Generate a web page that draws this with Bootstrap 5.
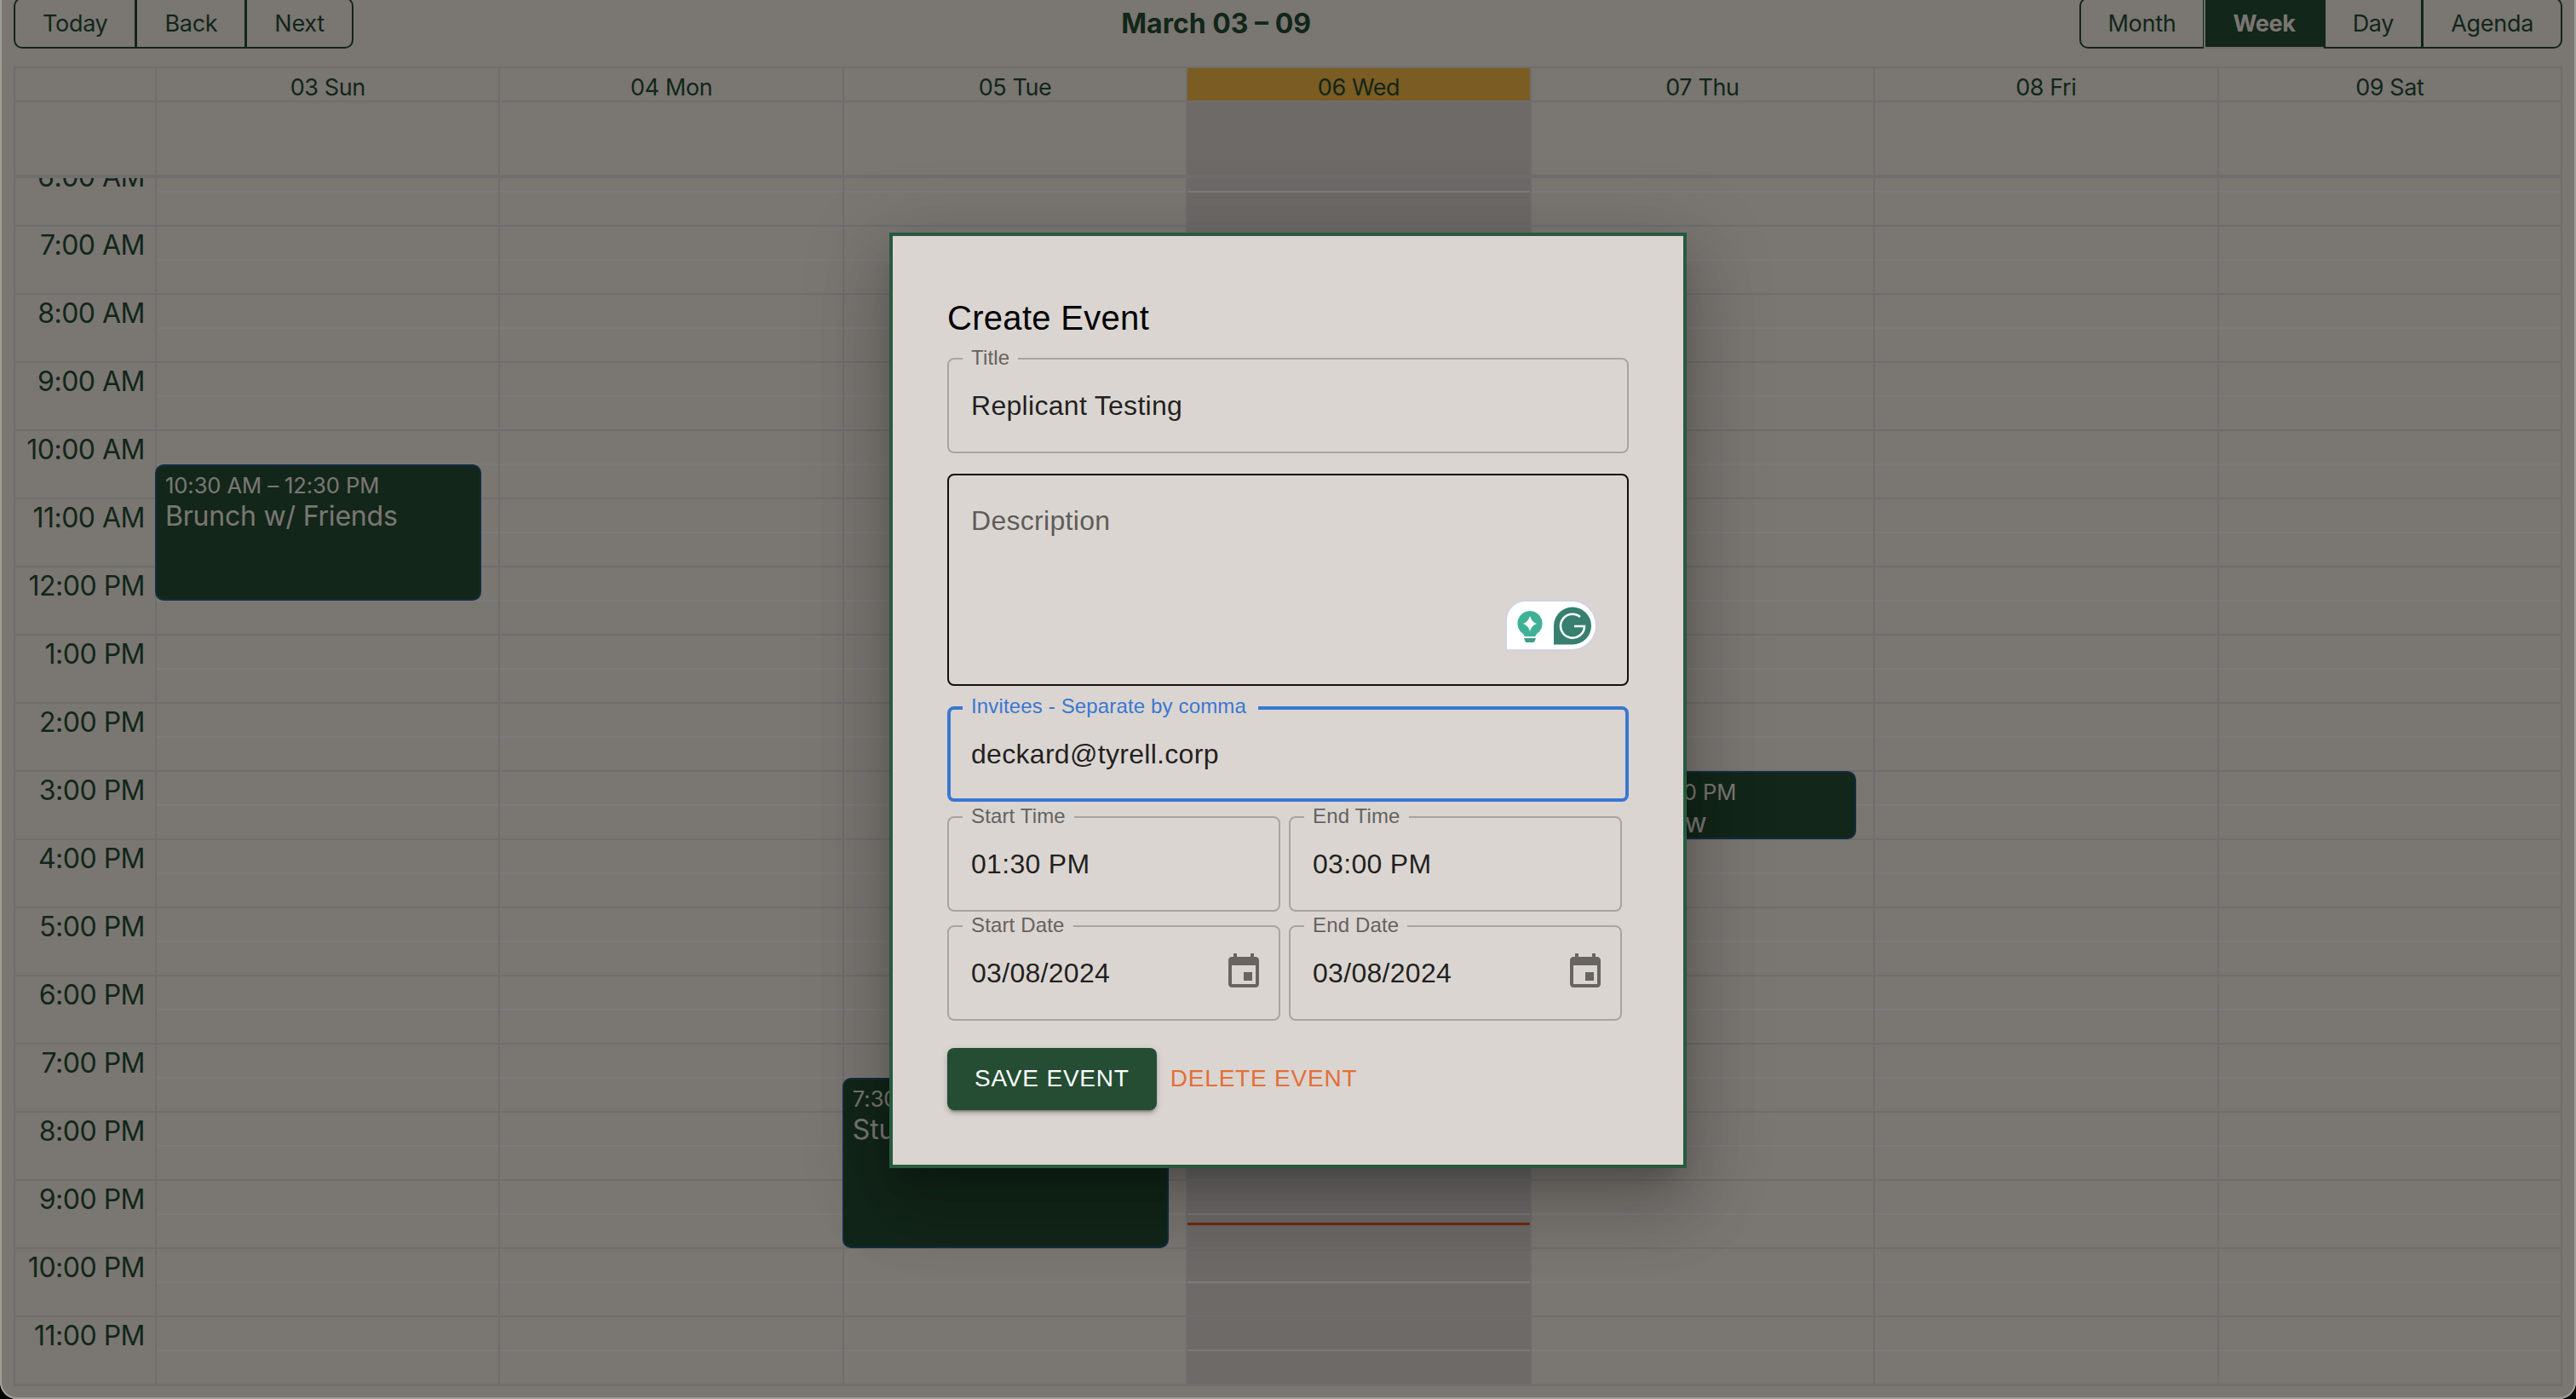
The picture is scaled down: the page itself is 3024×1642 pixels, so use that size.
<!DOCTYPE html>
<html lang="en">
<head>
    <meta charset="UTF-8">
    <meta name="viewport" content="width=device-width, initial-scale=1.0">
    <title>Calendar - Create Event</title>
    <link href="https://cdn.jsdelivr.net/npm/bootstrap@5.3.0/dist/css/bootstrap.min.css" rel="stylesheet">
    <style>
        html, body { height: 100%; }
        body { background: #000; font-family: "Inter", "Liberation Sans", sans-serif; color: #254d33; overflow: hidden; }

        .app-window { height: 1642px; background: #f5ede5; border-radius: 0 0 20px 20px; overflow: hidden; position: relative; padding: 0 16px; }

        /* toolbar */
        .cal-toolbar { height: 60px; margin-top: -3px; margin-bottom: 21px; position: relative; }
        .cal-btn { --bs-btn-border-radius: 10px; height: 60px; padding: 2px 32px 0; font-size: 27px; letter-spacing: -.3px; color: #254d33; background: transparent; border: 2px solid #254d33; }
        .cal-btn.is-on { background: #254d33; color: #f5ede5; font-weight: 700; border-left-color: #ddd; border-bottom-color: #ddd; border-top-color: #254d33; border-right-color: #254d33; }
        .cal-label { font-size: 32px; font-weight: 700; line-height: 1; margin-top: 2px; }

        /* calendar grid */
        .cal-box { border: 2px solid #ddd; height: 1549px; display: flex; flex-direction: column; }
        .cal-cols { display: grid; grid-template-columns: 164px repeat(7, 1fr); }
        .cal-head { border-bottom: 2px solid #ddd; height: 40px; }
        .cal-head > div { font-size: 27px; letter-spacing: -.4px; line-height: 46px; height: 38px; text-align: center; }
        .cal-head > div + div { border-left: 2px solid #ddd; }
        .cal-head .is-today { background: #f7b945; background-clip: padding-box; }
        .cal-allday { height: 89px; border-bottom: 4px solid #ddd; }
        .cal-allday > div + div { border-left: 2px solid #ddd; }
        .is-today { background: #dad5d1; }
        .cal-scroll { flex: 1; overflow: hidden; }
        .cal-times { margin-top: -23px; }
        .hour-label { height: 80px; border-bottom: 2px solid #ddd; font-size: 32px; letter-spacing: -.5px; line-height: 44px; text-align: right; padding-right: 12px; white-space: nowrap; }
        .day-col { position: relative; border-left: 2px solid #ddd; }
        .slot-a { height: 38px; }
        .slot-b { height: 42px; border-top: 2px solid #f7f7f7; border-bottom: 2px solid #ddd; }
        .cal-event { position: absolute; left: -2px; right: 20px; background: #254d33; color: #f5ede5; border: 2px solid #265985; border-radius: 10px; padding: 6px 10px; overflow: hidden; white-space: nowrap; }
        .cal-event-time { font-size: 25.6px; letter-spacing: -.1px; line-height: 34px; }
        .cal-event-title { font-size: 32px; letter-spacing: -.2px; line-height: 38px; }
        .now-line { position: absolute; left: 0; right: 0; height: 3px; background: #e8581c; }

        /* dialog */
        .dim-layer { position: absolute; inset: 0; background: rgba(0, 0, 0, .5); border: solid rgba(255, 255, 255, .28); border-width: 0 2px 2px; border-radius: 0 0 20px 20px; padding-top: 3px; }
        .event-dialog { width: 936px; background: #dad5d1; border: 4px solid #285a3e; padding: 64px; font-family: "Liberation Sans", Arial, sans-serif; color: rgba(0, 0, 0, .87);
            box-shadow: 0 22px 30px -14px rgba(0,0,0,.2), 0 48px 76px 6px rgba(0,0,0,.14), 0 18px 92px 16px rgba(0,0,0,.12); }
        .dialog-title { font-size: 40px; line-height: 64px; letter-spacing: .3px; margin: 0 0 15px; font-weight: 400; color: #000; }
        .out-field { position: relative; height: 112px; border: 2px solid #a8a4a1; border-radius: 8px; padding: 0 26px; font-size: 32px; letter-spacing: .3px; line-height: 46px; display: flex; align-items: center; justify-content: space-between; }
        .out-field > label { position: absolute; top: -14px; left: 16px; padding: 0 10px; margin: 0; font-size: 24px; letter-spacing: .15px; line-height: 24px; background: #dad5d1; color: #65625f; }
        .out-half { width: 391px; }
        .desc-field { height: 249px; border-color: #111; align-items: flex-start; padding-top: 30px; color: #5f5c5a; }
        .focus-field { border: 4px solid #3a77d1; padding: 0 24px; }
        .focus-field > label { color: #3a77d1; left: 14px; top: -16px; padding-right: 14px; }
        .cal-icon { width: 48px; height: 48px; fill: #686460; margin-right: -9px; margin-top: -2px; flex: none; }
        .gram-badge { position: absolute; right: 35px; bottom: 39px; width: 108px; height: 60px; background: #fff; border: 2px solid #d0d3e3; border-radius: 24px 30px 30px 0; }
        .gram-badge svg { position: absolute; left: -2px; top: -2px; }
        .field-row-time { gap: 10px; margin-top: 17px; }
        .field-row-date { gap: 10px; margin-top: 16px; }
        .dialog-actions { margin-top: 32px; }
        .save-btn { --bs-btn-border-radius: 8px; height: 73px; padding: 0 32px; border: 0; font-size: 28px; letter-spacing: .8px; text-transform: uppercase; background: #254d33; color: #fff;
            box-shadow: 0 6px 2px -4px rgba(0,0,0,.2), 0 4px 4px 0 rgba(0,0,0,.14), 0 2px 10px 0 rgba(0,0,0,.12); }
        .save-btn:hover { background: #254d33; color: #fff; }
        .delete-btn { height: 73px; padding: 0 16px; border: 0; font-size: 28px; letter-spacing: .8px; text-transform: uppercase; color: #e46f36; }
        .delete-btn:hover { color: #e46f36; }
    </style>
</head>
<body>
    <div class="app-window">
        <!-- Toolbar -->
        <div class="cal-toolbar d-flex align-items-center">
            <div class="btn-group">
                <button type="button" class="btn cal-btn">Today</button>
                <button type="button" class="btn cal-btn">Back</button>
                <button type="button" class="btn cal-btn">Next</button>
            </div>
            <div class="cal-label flex-grow-1 text-center">March 03 – 09</div>
            <div class="btn-group">
                <button type="button" class="btn cal-btn">Month</button>
                <button type="button" class="btn cal-btn is-on">Week</button>
                <button type="button" class="btn cal-btn">Day</button>
                <button type="button" class="btn cal-btn">Agenda</button>
            </div>
        </div>

        <!-- Week grid -->
        <div class="cal-box">
            <div class="cal-cols cal-head" id="cal-head"></div>
            <div class="cal-cols cal-allday" id="cal-allday"></div>
            <div class="cal-scroll">
                <div class="cal-cols cal-times" id="cal-times"></div>
            </div>
        </div>

        <!-- Create event dialog -->
        <div class="dim-layer d-flex align-items-center justify-content-center">
            <div class="event-dialog">
                <h2 class="dialog-title">Create Event</h2>
                <div class="out-field mb-4">
                    <label>Title</label>
                    <span>Replicant Testing</span>
                </div>
                <div class="out-field desc-field mb-4">
                    <span>Description</span>
                    <div class="gram-badge">
                        <svg width="108" height="60" viewBox="0 0 108 60">
                            <path d="M29 13a14.700 14.700 0 0 1 8 27c-1 1-1.500 2-1.500 3h-13c0-1-.5-2-1.500-3a14.700 14.700 0 0 1 8-27z" fill="#3fb296"/>
                            <path d="M22 45h14l-1.500 4a2 2 0 0 1-2 1h-7a2 2 0 0 1-2-1z" fill="#3f9f88"/>
                            <path d="M29 19Q31 26 37 28 31 30 29 37 27 30 21 28 27 26 29 19z" fill="#fff"/>
                            <path d="M79 8.500a22 22 0 0 1 0 44H57v-22a22 22 0 0 1 22-22z" fill="#377f6e"/>
                            <path d="M88 20a14 14 0 1 0 5 11H81" fill="none" stroke="#fff" stroke-width="2.600"/>
                        </svg>
                    </div>
                </div>
                <div class="out-field focus-field">
                    <label>Invitees - Separate by comma</label>
                    <span>deckard@tyrell.corp</span>
                </div>
                <div class="d-flex field-row-time">
                    <div class="out-field out-half"><label>Start Time</label><span>01:30 PM</span></div>
                    <div class="out-field out-half"><label>End Time</label><span>03:00 PM</span></div>
                </div>
                <div class="d-flex field-row-date">
                    <div class="out-field out-half">
                        <label>Start Date</label><span>03/08/2024</span>
                        <svg class="cal-icon" viewBox="0 0 24 24"><path d="M17 12h-5v5h5v-5zM16 1v2H8V1H6v2H5c-1.110 0-1.990.9-1.990 2L3 19c0 1.100.89 2 2 2h14c1.100 0 2-.9 2-2V5c0-1.100-.9-2-2-2h-1V1h-2zm3 18H5V8h14v11z"/></svg>
                    </div>
                    <div class="out-field out-half">
                        <label>End Date</label><span>03/08/2024</span>
                        <svg class="cal-icon" viewBox="0 0 24 24"><path d="M17 12h-5v5h5v-5zM16 1v2H8V1H6v2H5c-1.110 0-1.990.9-1.990 2L3 19c0 1.100.89 2 2 2h14c1.100 0 2-.9 2-2V5c0-1.100-.9-2-2-2h-1V1h-2zm3 18H5V8h14v11z"/></svg>
                    </div>
                </div>
                <div class="d-flex dialog-actions">
                    <button type="button" class="btn save-btn">Save Event</button>
                    <button type="button" class="btn delete-btn">Delete Event</button>
                </div>
            </div>
        </div>
    </div>

    <script src="https://cdn.jsdelivr.net/npm/bootstrap@5.3.0/dist/js/bootstrap.bundle.min.js"></script>
    <script>
        document.addEventListener("DOMContentLoaded", function() {
            const days = ['03 Sun', '04 Mon', '05 Tue', '06 Wed', '07 Thu', '08 Fri', '09 Sat'];
            const todayIndex = 3;
            const hours = ['6:00 AM', '7:00 AM', '8:00 AM', '9:00 AM', '10:00 AM', '11:00 AM', '12:00 PM',
                '1:00 PM', '2:00 PM', '3:00 PM', '4:00 PM', '5:00 PM', '6:00 PM', '7:00 PM', '8:00 PM',
                '9:00 PM', '10:00 PM', '11:00 PM'];
            const hourHeight = 80;
            const firstHour = 6;

            const events = [
                { day: 0, start: 10.5, end: 12.5, time: '10:30 AM – 12:30 PM', title: 'Brunch w/ Friends' },
                { day: 2, start: 19.5, end: 22, time: '7:30 PM – 10:00 PM', title: 'Study Session' },
                { day: 4, start: 15, end: 16, time: '3:00 PM – 4:00 PM', title: 'Code Review' }
            ];

            const head = document.getElementById('cal-head');
            const allDay = document.getElementById('cal-allday');
            const times = document.getElementById('cal-times');

            head.appendChild(document.createElement('div'));
            allDay.appendChild(document.createElement('div'));
            days.forEach(function(name, i) {
                const cell = document.createElement('div');
                cell.textContent = name;
                if (i === todayIndex) cell.classList.add('is-today');
                head.appendChild(cell);

                const slot = document.createElement('div');
                if (i === todayIndex) slot.classList.add('is-today');
                allDay.appendChild(slot);
            });

            const gutter = document.createElement('div');
            hours.forEach(function(h) {
                const label = document.createElement('div');
                label.classList.add('hour-label');
                label.textContent = h;
                gutter.appendChild(label);
            });
            times.appendChild(gutter);

            days.forEach(function(name, i) {
                const col = document.createElement('div');
                col.classList.add('day-col');
                if (i === todayIndex) col.classList.add('is-today');
                hours.forEach(function() {
                    const a = document.createElement('div');
                    a.classList.add('slot-a');
                    const b = document.createElement('div');
                    b.classList.add('slot-b');
                    col.appendChild(a);
                    col.appendChild(b);
                });
                events.filter(e => e.day === i).forEach(function(e) {
                    const box = document.createElement('div');
                    box.classList.add('cal-event');
                    box.style.top = ((e.start - firstHour) * hourHeight - 1) + 'px';
                    box.style.height = ((e.end - e.start) * hourHeight) + 'px';
                    box.innerHTML = '<div class="cal-event-time">' + e.time + '</div><div class="cal-event-title">' + e.title + '</div>';
                    col.appendChild(box);
                });
                if (i === todayIndex) {
                    const line = document.createElement('div');
                    line.classList.add('now-line');
                    line.style.top = ((21.1 - firstHour) * hourHeight + 41) + 'px';
                    col.appendChild(line);
                }
                times.appendChild(col);
            });
        });
    </script>
</body>
</html>
